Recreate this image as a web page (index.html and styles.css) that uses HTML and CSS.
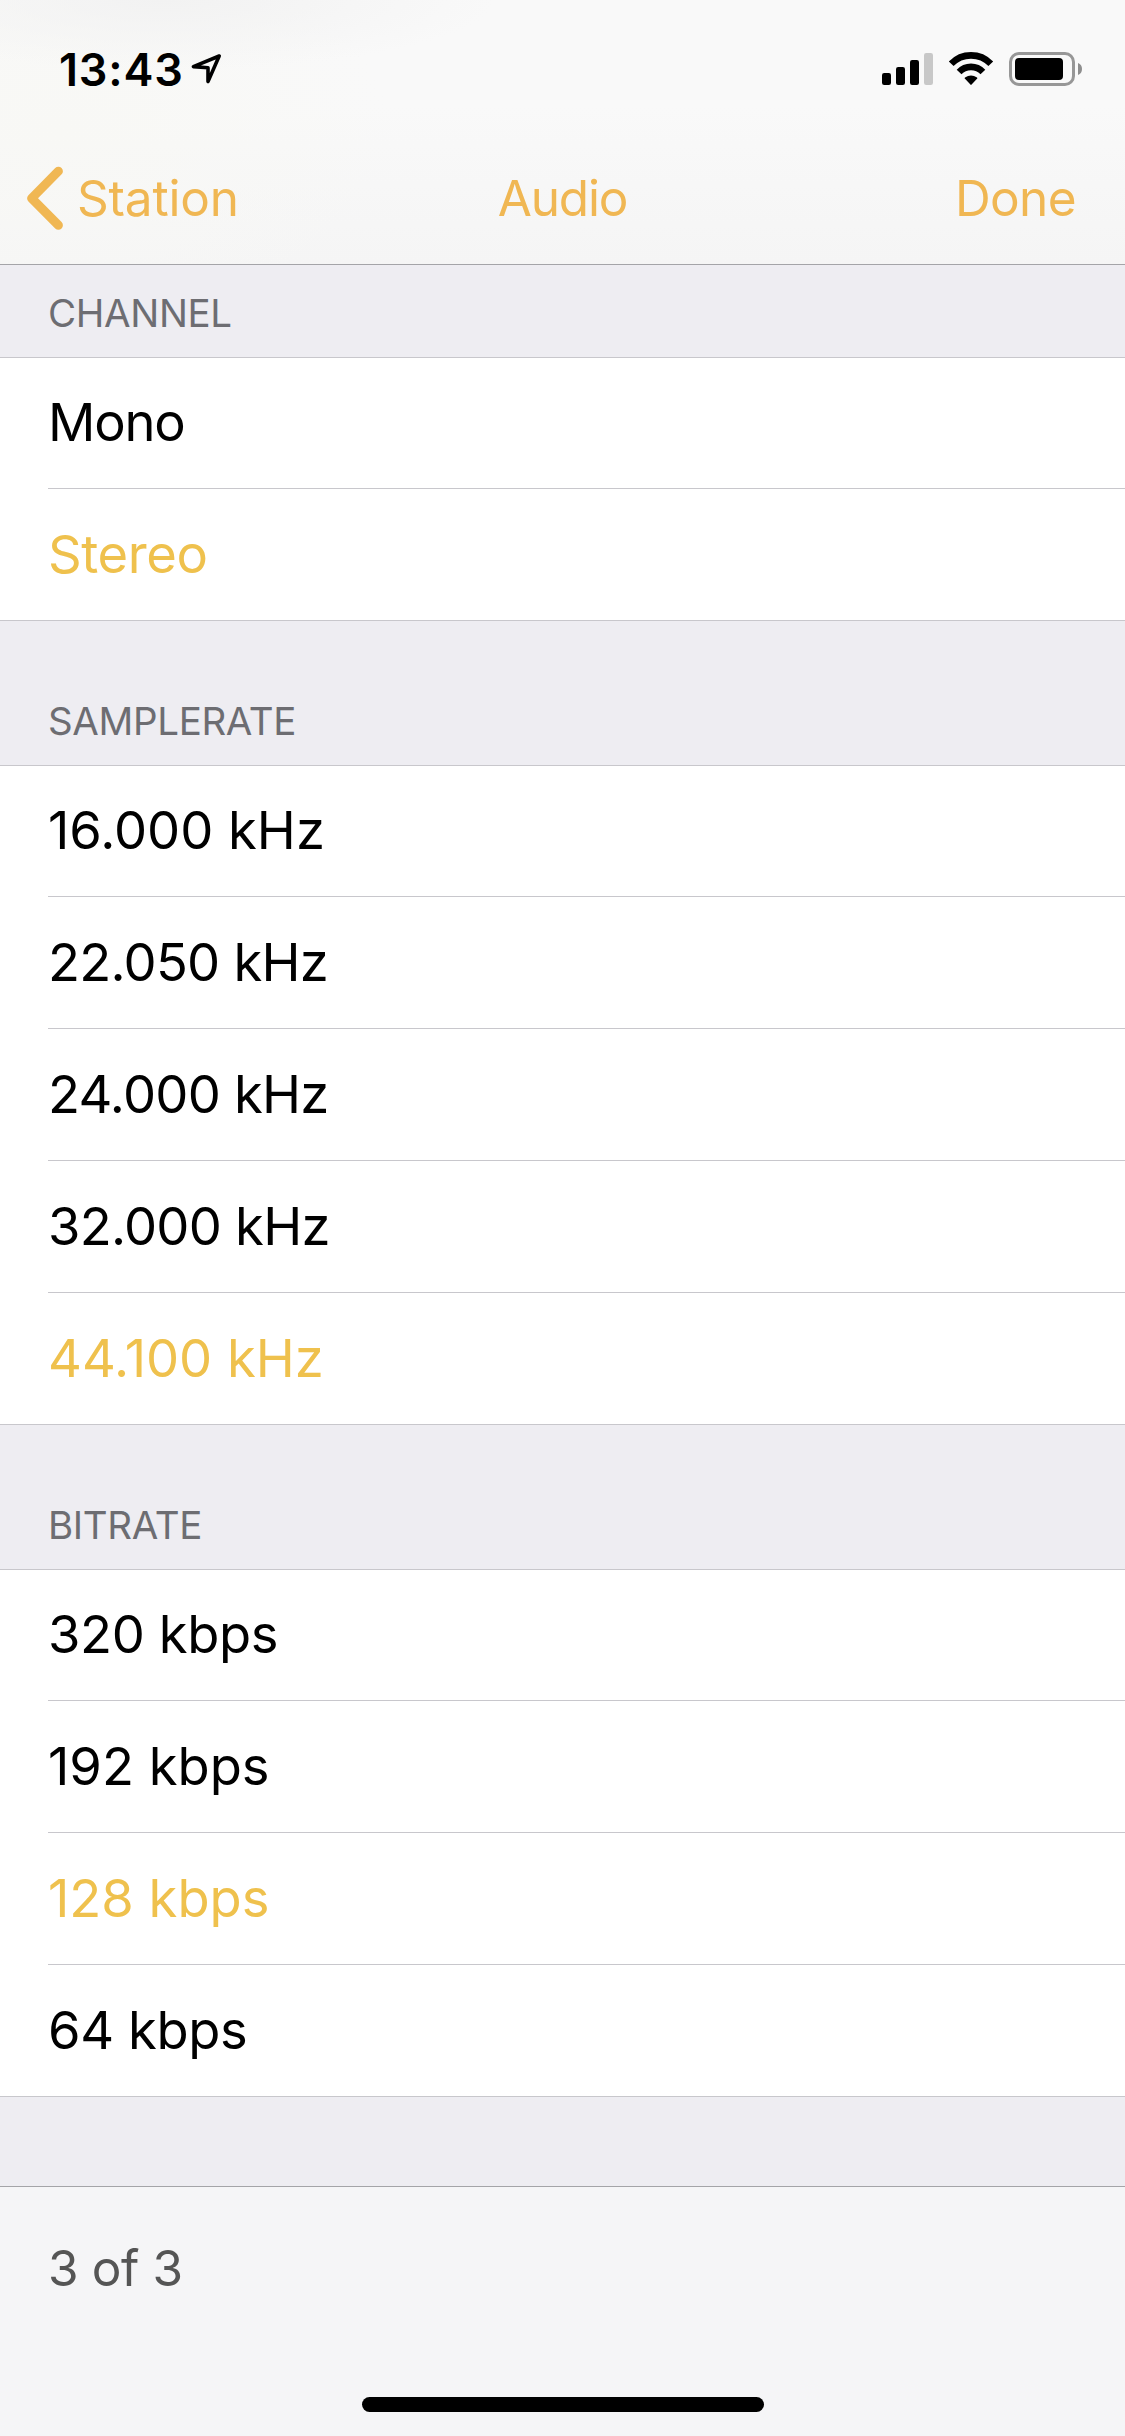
FILE: index.html
```html
<!DOCTYPE html>
<html lang="en">
  <head>
    <meta charset="UTF-8" />
    <meta name="viewport" content="width=device-width, initial-scale=1.0" />
    <title>Audio</title>
    <link rel="stylesheet" href="styles.css">
  </head>
  <body>
    <header class="top">
      <div class="status">
        <span class="time">13:43</span>
        <svg class="location" width="31" height="30" viewBox="0 0 31 30">
          <path d="M28.2 2 L2.4 12.6 L17 13.8 L17 27.6 Z" />
        </svg>
        <svg class="signals" width="200" height="34" viewBox="0 0 200 34">
          <!-- signal -->
          <rect x="0" y="21" width="9" height="12" rx="2.2" />
          <rect x="14" y="15" width="9" height="18" rx="2.2" />
          <rect x="28" y="8" width="9" height="25" rx="2.2" />
          <rect class="off" x="42" y="1" width="9" height="32" rx="2.2" />
          <!-- wifi -->
          <path class="arc" d="M69.2 11.8 A27.4 27.4 0 0 1 108.8 11.8" />
          <path class="arc" d="M77.1 20 A16.4 16.4 0 0 1 100.9 20" />
          <path d="M82.8 26.4 Q82.5 26 83 25.6 Q89 21.2 95 25.6 Q95.5 26 95.2 26.4 L89.6 32.6 Q89 33.2 88.4 32.6 Z" />
          <!-- battery -->
          <rect class="case" x="128.5" y="1.5" width="63" height="31" rx="8.5" />
          <rect x="133" y="6" width="48" height="22" rx="4" />
          <path class="cap" d="M196 11 Q200 12.5 200 17 Q200 21.5 196 23 Z" />
        </svg>
      </div>
      <nav class="nav">
        <a class="back">
          <svg width="40" height="64" viewBox="0 0 40 64">
            <path d="M34.4 5.2 L7.6 32.3 L34.4 59.2" />
          </svg>
          <span>Station</span>
        </a>
        <h1 class="title">Audio</h1>
        <a class="done">Done</a>
      </nav>
    </header>
    <main>
      <h2 class="first">Channel</h2>
      <ul>
        <li class="tighter">Mono</li>
        <li class="on">Stereo</li>
      </ul>
      <h2>Samplerate</h2>
      <ul>
        <li class="loose">16.000 kHz</li>
        <li class="tight">22.050 kHz</li>
        <li class="tight">24.000 kHz</li>
        <li class="tight">32.000 kHz</li>
        <li class="on loose">44.100 kHz</li>
      </ul>
      <h2>Bitrate</h2>
      <ul>
        <li>320 kbps</li>
        <li class="loose">192 kbps</li>
        <li class="on loose">128 kbps</li>
        <li>64 kbps</li>
      </ul>
    </main>
    <footer>
      <p>3 of 3</p>
      <div class="home"></div>
    </footer>
  </body>
</html>
```
FILE: styles.css
```css
* {
  margin: 0;
  padding: 0;
  box-sizing: border-box;
}
body {
  display: flex;
  flex-direction: column;
  width: 1125px;
  height: 2436px;
  background: #eeedf2;
  font-family: Inter, "Liberation Sans", sans-serif;
  color: #000;
}
ul {
  list-style: none;
}

/* top bar */
.top {
  height: 265px;
  border-bottom: 1px solid #a4a4a8;
  background:
    radial-gradient(ellipse 330px 70px at 165px 0, #f2f2f2, rgba(243, 243, 243, 0)),
    radial-gradient(ellipse 330px 200px at 60px 130px, #f8f8f5, rgba(248, 248, 246, 0)),
    linear-gradient(#f9f9f9 40%, #f5f5f5);
}
.status {
  display: flex;
  align-items: center;
  height: 132px;
  padding: 6px 43px 0 59px;
}
.time {
  width: 132px;
  font-size: 45px;
  font-weight: 600;
  letter-spacing: 0.8px;
}
.location {
  fill: none;
  stroke: #000;
  stroke-width: 3.6;
  stroke-linejoin: round;
}
.signals {
  margin-left: auto;
}
.signals .off {
  fill: #c8c8c8;
}
.signals .arc {
  fill: none;
  stroke: #000;
  stroke-width: 6.6;
}
.signals .case {
  fill: none;
  stroke: #979797;
  stroke-width: 3;
}
.signals .cap {
  fill: #8e8e8e;
}
.nav {
  display: grid;
  grid-template-columns: 1fr auto 1fr;
  align-items: center;
  height: 132px;
  padding: 0 49px 0 24px;
  font-size: 49.5px;
  color: #f0b753;
}
.back {
  display: flex;
  align-items: center;
  gap: 13px;
  letter-spacing: -0.2px;
}
.back svg {
  fill: none;
  stroke: #f0b753;
  stroke-width: 9;
  stroke-linecap: round;
  stroke-linejoin: round;
}
.title {
  margin-left: 25px;
  font-size: 49.5px;
  font-weight: 400;
  letter-spacing: -1.2px;
}
.done {
  text-align: right;
  letter-spacing: -0.6px;
}

/* lists */
main {
  flex: 1;
}
h2 {
  display: flex;
  align-items: flex-end;
  height: 145px;
  padding: 0 48px 21px;
  border-bottom: 1px solid #c8c7cc;
  font-size: 38.5px;
  font-weight: 400;
  line-height: 46px;
  letter-spacing: -0.35px;
  text-transform: uppercase;
  color: #6d6d72;
}
h2.first {
  height: 93px;
}
ul {
  padding-left: 48px;
  border-bottom: 1px solid #c8c7cc;
  background: #fff;
}
li {
  height: 132px;
  border-bottom: 1px solid #c8c7cc;
  font-size: 52.5px;
  line-height: 131px;
  letter-spacing: -0.4px;
}
li:first-child {
  height: 131px;
  line-height: 128px;
}
li:last-child {
  height: 131px;
  border-bottom: none;
}
li.on {
  color: #efc14d;
}
li.tight {
  letter-spacing: -0.75px;
}
li.tighter {
  letter-spacing: -1.2px;
}
li.loose {
  letter-spacing: 0;
}

/* bottom bar */
footer {
  display: flex;
  flex-direction: column;
  justify-content: space-between;
  height: 250px;
  padding-bottom: 24px;
  border-top: 1px solid #a4a4a8;
  background: #f5f5f7;
}
footer p {
  padding-left: 48px;
  font-size: 49.5px;
  line-height: 163px;
  letter-spacing: -0.4px;
  color: #555;
}
.home {
  width: 402px;
  height: 15px;
  margin: 0 auto;
  border-radius: 8px;
  background: #000;
}
```
